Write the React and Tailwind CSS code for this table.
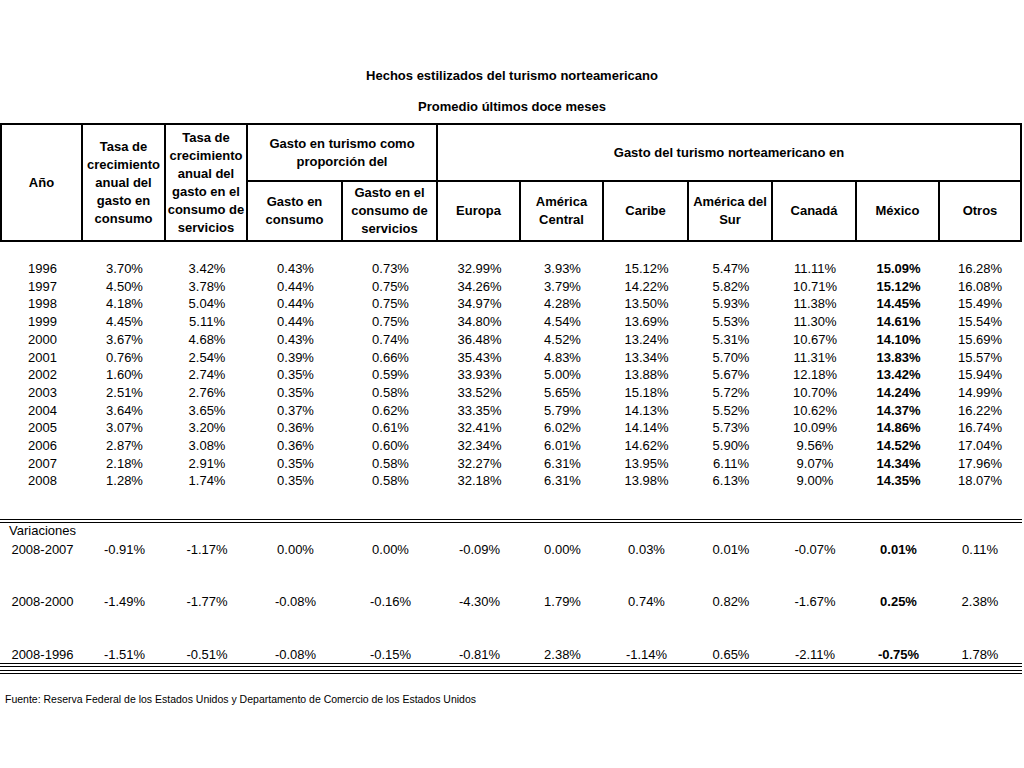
import React from "react";

const cols =
  "grid grid-cols-[81px_83px_82px_95px_95px_83px_83px_85px_84px_84px_83px_80px]";

const rows = [
  ["1996", "3.70%", "3.42%", "0.43%", "0.73%", "32.99%", "3.93%", "15.12%", "5.47%", "11.11%", "15.09%", "16.28%"],
  ["1997", "4.50%", "3.78%", "0.44%", "0.75%", "34.26%", "3.79%", "14.22%", "5.82%", "10.71%", "15.12%", "16.08%"],
  ["1998", "4.18%", "5.04%", "0.44%", "0.75%", "34.97%", "4.28%", "13.50%", "5.93%", "11.38%", "14.45%", "15.49%"],
  ["1999", "4.45%", "5.11%", "0.44%", "0.75%", "34.80%", "4.54%", "13.69%", "5.53%", "11.30%", "14.61%", "15.54%"],
  ["2000", "3.67%", "4.68%", "0.43%", "0.74%", "36.48%", "4.52%", "13.24%", "5.31%", "10.67%", "14.10%", "15.69%"],
  ["2001", "0.76%", "2.54%", "0.39%", "0.66%", "35.43%", "4.83%", "13.34%", "5.70%", "11.31%", "13.83%", "15.57%"],
  ["2002", "1.60%", "2.74%", "0.35%", "0.59%", "33.93%", "5.00%", "13.88%", "5.67%", "12.18%", "13.42%", "15.94%"],
  ["2003", "2.51%", "2.76%", "0.35%", "0.58%", "33.52%", "5.65%", "15.18%", "5.72%", "10.70%", "14.24%", "14.99%"],
  ["2004", "3.64%", "3.65%", "0.37%", "0.62%", "33.35%", "5.79%", "14.13%", "5.52%", "10.62%", "14.37%", "16.22%"],
  ["2005", "3.07%", "3.20%", "0.36%", "0.61%", "32.41%", "6.02%", "14.14%", "5.73%", "10.09%", "14.86%", "16.74%"],
  ["2006", "2.87%", "3.08%", "0.36%", "0.60%", "32.34%", "6.01%", "14.62%", "5.90%", "9.56%", "14.52%", "17.04%"],
  ["2007", "2.18%", "2.91%", "0.35%", "0.58%", "32.27%", "6.31%", "13.95%", "6.11%", "9.07%", "14.34%", "17.96%"],
  ["2008", "1.28%", "1.74%", "0.35%", "0.58%", "32.18%", "6.31%", "13.98%", "6.13%", "9.00%", "14.35%", "18.07%"],
];

const variaciones = [
  ["2008-2007", "-0.91%", "-1.17%", "0.00%", "0.00%", "-0.09%", "0.00%", "0.03%", "0.01%", "-0.07%", "0.01%", "0.11%"],
  ["2008-2000", "-1.49%", "-1.77%", "-0.08%", "-0.16%", "-4.30%", "1.79%", "0.74%", "0.82%", "-1.67%", "0.25%", "2.38%"],
  ["2008-1996", "-1.51%", "-0.51%", "-0.08%", "-0.15%", "-0.81%", "2.38%", "-1.14%", "0.65%", "-2.11%", "-0.75%", "1.78%"],
];

function DataRow({ cells, className = "" }) {
  return (
    <div className={`${cols} ${className}`}>
      {cells.map((c, i) => (
        <div key={i} className={`text-center ${i === 10 ? "font-bold" : ""}`}>
          {c}
        </div>
      ))}
    </div>
  );
}

function Head({ children, className = "" }) {
  return (
    <div
      className={`flex items-center justify-center text-center font-bold leading-[18px] border-black ${className}`}
    >
      <div>{children}</div>
    </div>
  );
}

export default function App() {
  return (
    <div
      className="w-[1024px] h-[768px] bg-white text-black text-[13px] overflow-hidden"
      style={{ fontFamily: '"Liberation Sans", Arial, sans-serif' }}
    >
      {/* Titles */}
      <div className="pt-[68px] text-center font-bold text-[13px] leading-[16px]">
        <div>Hechos estilizados del turismo norteamericano</div>
        <div className="mt-[15px]">Promedio últimos doce meses</div>
      </div>

      <div className="w-[1022px] mt-[8px]">
        {/* Header */}
        <div className={`${cols} grid-rows-[57px_58px] border-2 border-black`}>
          <Head className="row-span-2 border-r-2">Año</Head>
          <Head className="row-span-2 border-r-2">
            Tasa de
            <br />
            crecimiento
            <br />
            anual del
            <br />
            gasto en
            <br />
            consumo
          </Head>
          <Head className="row-span-2 border-r-2 whitespace-nowrap">
            Tasa de
            <br />
            crecimiento
            <br />
            anual del
            <br />
            gasto en el
            <br />
            consumo de
            <br />
            servicios
          </Head>
          <Head className="col-span-2 border-r-2 border-b-2">
            Gasto en turismo como
            <br />
            proporción del
          </Head>
          <Head className="col-span-7 border-b-2">Gasto del turismo norteamericano en</Head>
          <Head className="border-r-2">
            Gasto en
            <br />
            consumo
          </Head>
          <Head className="border-r-2">
            Gasto en el
            <br />
            consumo de
            <br />
            servicios
          </Head>
          <Head className="border-r-2">Europa</Head>
          <Head className="border-r-2">
            América
            <br />
            Central
          </Head>
          <Head className="border-r-2">Caribe</Head>
          <Head className="border-r-2 whitespace-nowrap">
            América del
            <br />
            Sur
          </Head>
          <Head className="border-r-2">Canadá</Head>
          <Head className="border-r-2">México</Head>
          <Head>Otros</Head>
        </div>

        {/* Yearly data */}
        <div className="px-[2px] mt-[18px] leading-[17.7px]">
          {rows.map((r) => (
            <DataRow key={r[0]} cells={r} />
          ))}
        </div>

        {/* Variaciones */}
        <div className="mt-[29px] border-t-4 border-double border-black" />
        <div className="pl-[9px] leading-[15px]">Variaciones</div>
        <div className="px-[2px] leading-[18px]">
          <DataRow cells={variaciones[0]} className="mt-[3px]" />
          <DataRow cells={variaciones[1]} className="mt-[34px]" />
          <DataRow cells={variaciones[2]} className="mt-[35px] leading-[17px]" />
        </div>
        <div className="border-t-4 border-double border-black" />
        <div className="mt-[3px] border-t-4 border-double border-black" />
      </div>

      <div className="mt-[19px] pl-[5px] text-[10.5px] leading-[12px]">
        Fuente: Reserva Federal de los Estados Unidos y Departamento de Comercio de los Estados Unidos
      </div>
    </div>
  );
}
